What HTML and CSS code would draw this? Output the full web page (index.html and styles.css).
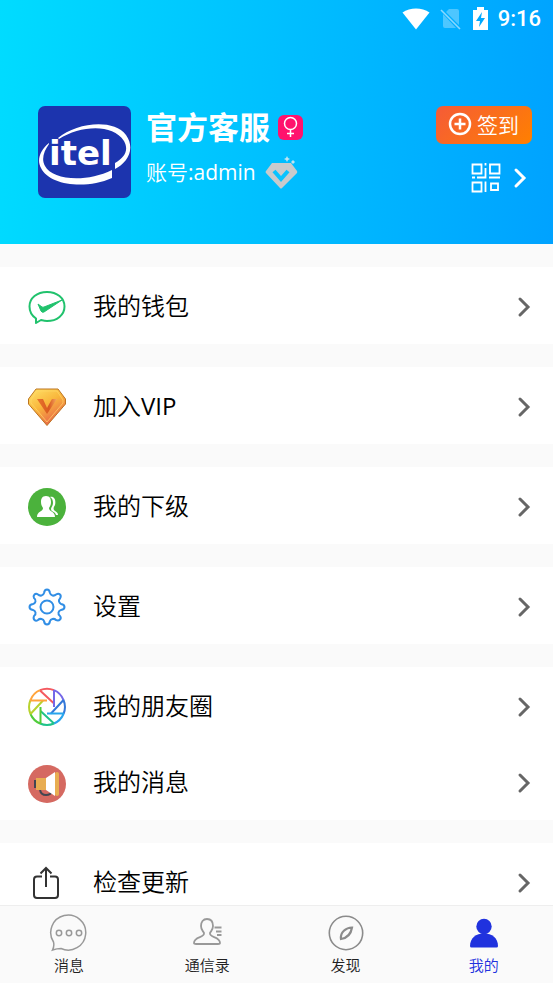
FILE: index.html
```html
<!DOCTYPE html>
<html lang="zh-CN">
<head>
    <meta charset="UTF-8">
    <title>我的</title>
    <meta name="viewport" content="width=device-width, initial-scale=1.0">
    <link rel="stylesheet" href="styles.css">
</head>
<body>
    <header class="header">
        <div class="status-bar">
            <svg width="28" height="22" viewBox="0 0 28 22"><path d="M0.5 4.5C8-1 20-1 27.500 4.500L14 21.500Z" fill="#fff"/></svg>
            <svg width="22" height="22" viewBox="0 0 22 22"><path d="M9 1h8q2 0 2 2v14L6 4zM3 6l13 14H5q-2 0-2-2z" fill="#fff" opacity=".3"/><path d="M1 2l19 19" stroke="#8ad8ff" stroke-width="1.600"/></svg>
            <svg class="battery" width="15" height="23" viewBox="0 0 15 23"><path d="M0 3h4V0h7v3h4v20H0z" fill="#fff"/><path d="M9 5l-6 9h4l-1 6 6-9H8z" fill="#00a9ff"/></svg>
            <span class="clock">9:16</span>
        </div>

        <div class="profile">
            <svg class="avatar" width="93" height="92" viewBox="0 0 93 92" role="img" aria-label="itel">
                <rect width="93" height="92" rx="7" fill="#1c34ae"/>
                <path d="M20 32C38 17 75 12 88 29c10 14 1 28-11 34v-6c10-6 14-13 9-22C74 17 42 20 21 33z" fill="#fff"/>
                <path d="M11 37C1 45-1 55 3 62c8 17 44 22 71 10v-8C48 77 14 74 7 60 3 53 6 45 11 38z" fill="#fff"/>
                <text class="avatar-text" x="11" y="59">itel</text>
            </svg>

            <div class="identity">
                <div class="line">
                    <h1 class="name">官方客服</h1>
                    <svg width="25" height="25" viewBox="0 0 25 25"><rect width="25" height="25" rx="6" fill="#ff126d"/><g fill="none" stroke="#fff" stroke-width="1.500"><circle cx="12.500" cy="8.500" r="6"/><path d="M12.500 14.500V22M9 18.500h7"/></g></svg>
                </div>
                <div class="line">
                    <span class="account">账号<span class="latin">:admin</span></span>
                    <svg width="34" height="34" viewBox="0 0 34 34"><path d="M8 7h19l6 8q.500 1 0 2L18 32q-1 1-2 0L2 17q-1-1 0-2z" fill="#c9cacc"/><path d="M10 15l7 8 7-8" fill="none" stroke="#08c3ff" stroke-width="4"/><path d="M23 0l1 2 2 1-2 1-1 2-1-2-2-1 2-1zM29 4l1 1 1 1-1 1-1 1-1-1-1-1 1-1z" fill="#bfe4f2"/></svg>
                </div>
            </div>

            <div class="actions">
                <button class="checkin" type="button">
                    <svg width="24" height="24" viewBox="0 0 24 24" fill="none" stroke="#fff"><circle cx="12" cy="12" r="10" stroke-width="2.500"/><path d="M12 6.500v11M6.500 12h11" stroke-width="2.500"/></svg>
                    签到
                </button>
                <a class="qr-link" href="#" aria-label="二维码">
                    <svg width="30" height="30" viewBox="0 0 30 30" fill="none" stroke="#fff" stroke-width="1.800"><path d="M1.500 1.500h9v9h-9zM19 1.500h9.500v9H19zM1.500 19.500h9v9h-9zM20 20.500h7v6.500h-7zM14.500 5v9.500H6M1 14.500h3M18 14.500h11M14.500 0v2.500M14.500 18.500V29"/></svg>
                    <svg width="14" height="22" viewBox="0 0 14 22"><path d="M3 3l8 8-8 8" fill="none" stroke="#fff" stroke-width="3" stroke-linecap="round"/></svg>
                </a>
            </div>
        </div>
    </header>

    <main class="menu">
        <div class="group">
            <a class="row" href="#">
                <svg class="icon" viewBox="0 0 40 40" fill="none" stroke="#21c26d" stroke-width="2"><path d="M9 31.500C4.500 28.500 2.500 24 2.500 19.500 2.500 11 10 5 20 5s17.500 6 17.500 14.500S30 34 20 34c-2 0-4-.5-6-1L9 36z" stroke-linejoin="round"/><path d="M11 17l4 3q1 .500 2 0L35 13 17 25q-2 1-3-1z" fill="#21c26d" stroke-width="1"/></svg>
                <span class="label">我的钱包</span>
                <svg class="arrow" viewBox="0 0 14 22"><path d="M3 3l8 8-8 8"/></svg>
            </a>
        </div>

        <div class="group">
            <a class="row" href="#">
                <svg class="icon" viewBox="0 0 40 40">
                    <defs>
                        <linearGradient id="gold" x1="0" y1="0" x2=".6" y2="1"><stop offset="0" stop-color="#ffe36a"/><stop offset=".5" stop-color="#f9b73c"/><stop offset="1" stop-color="#e8604c"/></linearGradient>
                        <linearGradient id="vee" x1="0" y1="0" x2="1" y2="0"><stop offset="0" stop-color="#e9742c"/><stop offset=".6" stop-color="#d85a20"/><stop offset="1" stop-color="#f7aa62"/></linearGradient>
                    </defs>
                    <path d="M9 2h22l7.500 10v5L20 38.500 1.500 17v-5z" fill="url(#gold)" stroke="#bd7520" stroke-linejoin="round"/>
                    <path d="M10 4h20l6 9v3L20 35 4 16v-3z" fill="none" stroke="#ffd867" opacity=".7"/>
                    <path d="M10 12h6l4 9 5-9h5L20 27z" fill="url(#vee)"/>
                </svg>
                <span class="label">加入<span class="latin">VIP</span></span>
                <svg class="arrow" viewBox="0 0 14 22"><path d="M3 3l8 8-8 8"/></svg>
            </a>
        </div>

        <div class="group">
            <a class="row" href="#">
                <svg class="icon" viewBox="0 0 40 40"><circle cx="20" cy="20" r="19" fill="#4bb23c"/><g fill="#fff"><path d="M23 10c5-1 6 4 5 8-1 2-2 3-1 5 2 2 4 2 4 5h-2c-1-4-5-3-5-6 0-2 2-3 2-6s-1-5-3-6z"/><path d="M19 9c4 0 5 3 5 6s-1 4-2 6c0 4 6 3 6 9H10c0-6 6-5 6-9-1-2-2-3-2-6s1-6 5-6z"/></g></svg>
                <span class="label">我的下级</span>
                <svg class="arrow" viewBox="0 0 14 22"><path d="M3 3l8 8-8 8"/></svg>
            </a>
        </div>

        <div class="group">
            <a class="row" href="#">
                <svg class="icon" viewBox="0 0 40 40" fill="none" stroke="#318ee5" stroke-width="2" stroke-linejoin="round"><circle cx="20" cy="20" r="6.500"/><path d="M17 6q.500-3.500 3-3.500T23 6q.500 2 2.500 2.500T29 7.500q2.500-1.500 4 0t0 4q-1.500 1.500-1 3T34 17q3.500.500 3.500 3T34 23q-2 .500-2.500 2.500T33 29q1.500 2 0 3.500t-4 .500q-1.500-1.500-3.500-1T23 34q-.500 3.500-3 3.500T17 34q-.500-1.500-2.500-2t-3.500 1q-2 1.500-3.500 0T7 29q2-1.500 1.500-3.500T6 23q-3.500-.500-3.500-3T6 17q2-.500 2.500-2.500T7 11q-1-2 .500-3.500T11 7.500q1.500 1.500 3.500 1T17 6z"/></svg>
                <span class="label">设置</span>
                <svg class="arrow" viewBox="0 0 14 22"><path d="M3 3l8 8-8 8"/></svg>
            </a>
        </div>

        <div class="group">
            <a class="row" href="#">
                <svg class="icon" viewBox="0 0 40 40" fill="none" stroke-width="2">
                    <path d="M13 3.200A18 18 0 0 1 27 3.200M13 3.500L26.500 16" stroke="#f45a60"/>
                    <path d="M27 3.200A18 18 0 0 1 36.500 13M27 3v17" stroke="#7567e8"/>
                    <path d="M36.500 13a18 18 0 0 1 0 14M36.500 13L24 26.500" stroke="#3478d8"/>
                    <path d="M36.500 27A18 18 0 0 1 27 36.500M37 26.500H20" stroke="#28a5ed"/>
                    <path d="M27 36.500a18 18 0 0 1-14 0M27 36.500L13.500 24" stroke="#1fc38a"/>
                    <path d="M13 36.500A18 18 0 0 1 3.500 27M13.500 37V20" stroke="#50cc3b"/>
                    <path d="M3.500 27a18 18 0 0 1 0-14M3.500 27L16 13.500" stroke="#b8d22e"/>
                    <path d="M3.500 13A18 18 0 0 1 13 3.200M3 13.500h17" stroke="#ffa43b"/>
                </svg>
                <span class="label">我的朋友圈</span>
                <svg class="arrow" viewBox="0 0 14 22"><path d="M3 3l8 8-8 8"/></svg>
            </a>
            <a class="row" href="#">
                <svg class="icon" viewBox="0 0 40 40"><circle cx="20" cy="20" r="19" fill="#d56961"/><path d="M13 26q1 5 6 5t6-4" fill="none" stroke="#424652" stroke-width="2"/><path d="M7 16h3v8H7z" fill="#424652"/><path d="M9 14h10v12H9z" fill="#e8ad51"/><path d="M19 14l9-6v24l-9-6z" fill="#fff"/><rect x="28" y="8" width="4" height="24" rx="2" fill="#e8ad51"/></svg>
                <span class="label">我的消息</span>
                <svg class="arrow" viewBox="0 0 14 22"><path d="M3 3l8 8-8 8"/></svg>
            </a>
        </div>

        <div class="group">
            <a class="row" href="#">
                <svg class="icon" viewBox="0 0 40 40" fill="none" stroke="#333" stroke-width="2"><path d="M15 13.500h-5q-3 0-3 3V32q0 3 3 3h18q3 0 3-3V16.500q0-3-3-3h-5M19 24V5M13.500 10.500L19 5l5.500 5.500"/></svg>
                <span class="label">检查更新</span>
                <svg class="arrow" viewBox="0 0 14 22"><path d="M3 3l8 8-8 8"/></svg>
            </a>
        </div>
    </main>

    <nav class="tabs">
        <a class="tab" href="#">
            <svg viewBox="0 0 40 40" fill="none" stroke="#999" stroke-width="1.500"><path d="M4.500 29A17.500 17.500 0 1 1 12 35.500Q8 35.500 3.500 37 5.500 33 4.500 29z"/><circle cx="10" cy="20" r="2.700"/><circle cx="20" cy="20" r="2.700"/><circle cx="30" cy="20" r="2.700"/></svg>
            消息
        </a>
        <a class="tab" href="#">
            <svg viewBox="0 0 40 40" fill="none" stroke="#999" stroke-width="1.800"><path d="M20 6c4 0 6 3 6 7s-2 5-3 7c-1 5 10 3 10 10q0 1-2 1H9q-2 0-2-1c0-7 11-5 10-10-1-2-3-3-3-7s2-7 6-7zM27.500 14.500h7M29 18.500h5.500M30 22h4.500"/></svg>
            通信录
        </a>
        <a class="tab" href="#">
            <svg viewBox="0 0 40 40" fill="none" stroke="#8b8b8b"><circle cx="20" cy="20" r="16.700" stroke-width="1.600"/><path d="M26 14.500c-6 0-12 5-11 11.500 6-1 10-5 11-11.500z" stroke-width="2.200"/></svg>
            发现
        </a>
        <a class="tab active" href="#">
            <svg viewBox="0 0 40 40" fill="#2032de"><circle cx="20" cy="13.500" r="7.700"/><path d="M6 33c0-8 6-12.500 14-12.500S34 25 34 33q0 1.500-1.500 1.500h-25Q6 34.500 6 33z"/></svg>
            我的
        </a>
    </nav>
</body>
</html>
```
FILE: styles.css
```css
* {
    box-sizing: border-box;
}

body {
    display: flex;
    flex-direction: column;
    height: 100vh;
    margin: 0;
    background: #fafafa;
    color: #000;
    font-family: "Open Sans", "Noto Sans CJK SC", sans-serif;
    font-weight: 350;
}

svg {
    display: block;
    flex-shrink: 0;
}

a {
    color: inherit;
    text-decoration: none;
}

.latin {
    font-weight: 400;
}

.header {
    flex-shrink: 0;
    padding-bottom: 46px;
    background: linear-gradient(95deg, #00dcff, #00a2ff);
    color: #fff;
}

.status-bar {
    display: flex;
    justify-content: flex-end;
    align-items: center;
    gap: 10px;
    height: 37px;
    padding-right: 12px;
}

.battery {
    margin-left: 1px;
}

.clock {
    font-family: Roboto, sans-serif;
    font-size: 22px;
    font-weight: 500;
}

.profile {
    display: flex;
    padding: 69px 21px 0 38px;
}

.avatar-text {
    fill: #fff;
    font-family: "DejaVu Sans", sans-serif;
    font-size: 34px;
    font-weight: bold;
}

.identity {
    flex: 1;
    padding-left: 15px;
}

.line {
    display: flex;
    align-items: center;
    gap: 8px;
}

.name {
    margin: 0;
    font-size: 31px;
    font-weight: bold;
    line-height: 42px;
}

.account {
    font-size: 21px;
    line-height: 49px;
}

.actions {
    display: flex;
    flex-direction: column;
    align-items: flex-end;
    gap: 19px;
}

.checkin {
    display: flex;
    align-items: center;
    gap: 5px;
    height: 38px;
    padding: 0 13px 2px 12px;
    border: none;
    border-radius: 7px;
    background: linear-gradient(135deg, #f55b38, #ff8000);
    color: #fff;
    font-family: inherit;
    font-size: 21px;
    font-weight: inherit;
    cursor: pointer;
}

.qr-link {
    display: flex;
    align-items: center;
    gap: 12px;
    padding-right: 5px;
}

.menu {
    flex: 1;
    min-height: 0;
    overflow: hidden;
}

.group {
    margin-top: 23px;
    background: #fff;
}

.row {
    display: flex;
    align-items: center;
    height: 77px;
    padding: 0 22px 0 27px;
}

.row + .row {
    height: 76px;
}

.icon {
    width: 40px;
    height: 40px;
    margin-top: 3px;
}

.label {
    flex: 1;
    padding-left: 26px;
    font-size: 24px;
    line-height: 40px;
}

.arrow {
    width: 14px;
    height: 22px;
    margin-top: 2px;
    fill: none;
    stroke: #666;
    stroke-width: 3;
    stroke-linecap: round;
}

.tabs {
    display: flex;
    flex-shrink: 0;
    height: 78px;
    padding-top: 7px;
    border-top: 1px solid #eee;
    background: #fafafa;
}

.tab {
    flex: 1;
    display: flex;
    flex-direction: column;
    align-items: center;
    color: #222;
    font-size: 15px;
    line-height: 24px;
}

.tab svg {
    width: 40px;
    height: 40px;
}

.tab.active {
    color: #2032de;
}
```
